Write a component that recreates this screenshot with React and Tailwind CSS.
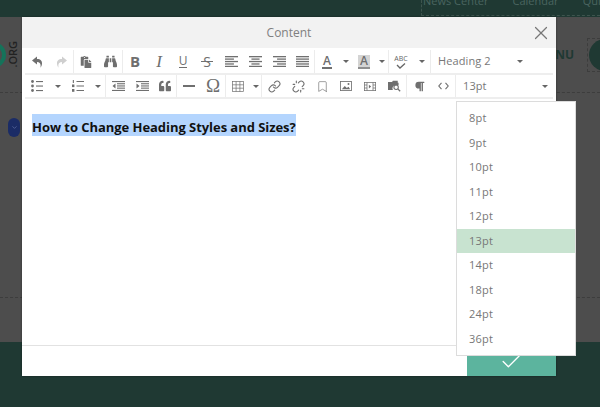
import { Link, Unlink, Bookmark, X, Check, ChevronDown } from "lucide-react";
import { FaBinoculars, FaParagraph, FaQuoteLeft, FaPaste } from "react-icons/fa";

const sizes = ["8pt", "9pt", "10pt", "11pt", "12pt", "13pt", "14pt", "18pt", "24pt", "36pt"];

function Caret() {
    return <span className="h-0 w-0 border-x-[3px] border-t-[3px] border-x-transparent border-t-[#666]" />;
}

function Lines({ widths }) {
    return (
        <svg width="13" height="11" viewBox="0 0 16 13.5" fill="#6f6f6f">
            {[0, 1, 2, 3, 4].map((i) => (
                <rect key={i} x={widths[i][0]} y={i * 3} width={widths[i][1]} height="1.6" />
            ))}
        </svg>
    );
}

const left = [[0, 16], [0, 11], [0, 16], [0, 11], [0, 16]];
const center = [[0, 16], [3, 10], [0, 16], [3, 10], [0, 16]];
const right = [[0, 16], [5, 11], [0, 16], [5, 11], [0, 16]];
const full = [[0, 16], [0, 16], [0, 16], [0, 16], [0, 16]];

function Arrow({ flip, color }) {
    return (
        <svg width="11" height="12" viewBox="0 0 11 12" fill={color} className={flip ? "-scale-x-100" : ""}>
            <path d="M5 0.5L0 4.5L5 8.5V6C8 6 9.2 7.8 8.4 11.8C10.8 8.6 11.2 3 5 3z" />
        </svg>
    );
}

function BulletList() {
    return (
        <svg width="12" height="12" viewBox="0 0 12 12" fill="#6f6f6f">
            <circle cx="1.5" cy="1.5" r="1.4" />
            <circle cx="1.5" cy="6" r="1.4" />
            <circle cx="1.5" cy="10.5" r="1.4" />
            <rect x="5" y="1" width="7" height="1.1" />
            <rect x="5" y="5.5" width="7" height="1.1" />
            <rect x="5" y="10" width="7" height="1.1" />
        </svg>
    );
}

function NumList() {
    return (
        <svg width="12" height="12" viewBox="0 0 12 12" fill="#6f6f6f">
            <rect x="0.8" y="0" width="1.1" height="3" />
            <rect x="0" y="4.5" width="2.4" height="2.6" />
            <rect x="0" y="9" width="2.4" height="2.8" />
            <rect x="4.5" y="1" width="7.5" height="1" />
            <rect x="4.5" y="5.5" width="7.5" height="1" />
            <rect x="4.5" y="10" width="7.5" height="1" />
        </svg>
    );
}

function Indent({ out }) {
    return (
        <svg width="13" height="10" viewBox="0 0 13 10" fill="#6f6f6f">
            <rect x="0" y="0" width="13" height="1.1" />
            <rect x="5" y="2.2" width="8" height="1.1" />
            <rect x="5" y="4.4" width="8" height="1.1" />
            <rect x="5" y="6.6" width="8" height="1.1" />
            <rect x="0" y="8.9" width="13" height="1.1" />
            <path d={out ? "M3.5 2.5v5L0.5 5z" : "M0.5 2.5v5L3.5 5z"} />
        </svg>
    );
}

function TableIcon() {
    return (
        <svg width="12" height="11" viewBox="0 0 12 11" fill="none" stroke="#6f6f6f" strokeWidth="0.7">
            <rect x="0.4" y="0.4" width="11.2" height="10.2" />
            <path d="M0.4 3.8h11.2M0.4 7.2h11.2M4.1 0.4v10.2M7.9 0.4v10.2" />
        </svg>
    );
}

function ImageIcon() {
    return (
        <svg width="12" height="10" viewBox="0 0 14 12" fill="none">
            <rect x="0.5" y="0.5" width="13" height="11" stroke="#6f6f6f" />
            <path d="M2 10l3.5-4 2.5 2.5 2-1.5 2 3z" fill="#6f6f6f" />
            <circle cx="10" cy="3.7" r="1.2" fill="#6f6f6f" />
        </svg>
    );
}

function MediaIcon() {
    return (
        <svg width="12" height="9" viewBox="0 0 16 12" fill="none" stroke="#6f6f6f">
            <rect x="0.5" y="0.5" width="15" height="11" />
            <path d="M4 0.5v11M12 0.5v11M0.5 4h3.5M0.5 8h3.5M12 4h3.5M12 8h3.5" />
            <path d="M6.5 3.5v5l3-2.5z" fill="#6f6f6f" stroke="none" />
        </svg>
    );
}

function FolderSearch() {
    return (
        <svg width="13" height="12" viewBox="0 0 16 14" fill="#6f6f6f">
            <path d="M0 2h5l1-1.5h6V3H13v3H9a4 4 0 0 0-3 6H0z" />
            <circle cx="10" cy="8.5" r="2.7" fill="none" stroke="#6f6f6f" strokeWidth="1.3" />
            <path d="M12 10.5l3 3" stroke="#6f6f6f" strokeWidth="1.5" />
        </svg>
    );
}

function Code() {
    return (
        <svg width="11" height="8" viewBox="0 0 11 8" fill="none" stroke="#6f6f6f" strokeWidth="1.1">
            <path d="M3.5 0.8L0.8 4l2.7 3.2M7.5 0.8L10.2 4l-2.7 3.2" />
        </svg>
    );
}

function Spell() {
    return (
        <div className="flex flex-col items-center leading-none">
            <span className="text-[7px] leading-[8px] text-[#666]">ABC</span>
            <svg width="10" height="6" viewBox="0 0 10 6" fill="none" stroke="#666" strokeWidth="1.3">
                <path d="M1 2l3 3 5-4.5" />
            </svg>
        </div>
    );
}

function Btn({ w = "w-6", children }) {
    return <div className={`flex ${w} h-full shrink-0 items-center justify-center`}>{children}</div>;
}

function Sep() {
    return <div className="h-full w-px shrink-0 bg-[#ececec]" />;
}

const ic = "text-[#6f6f6f]";

function Toolbar() {
    return (
        <div className="mx-[3px] mt-[2px] flex flex-col text-[#6f6f6f]">
            <div className="flex h-[25px] items-center border-b-2 border-[#eeeeee]">
                <Btn><Arrow color="#6f6f6f" /></Btn>
                <Btn><Arrow flip color="#cfcfcf" /></Btn>
                <Sep />
                <Btn><FaPaste size={12} className={ic} /></Btn>
                <Btn><FaBinoculars size={13} className={ic} /></Btn>
                <Sep />
                <Btn><span className="text-[15px] font-bold">B</span></Btn>
                <Btn><span className="font-['Liberation_Serif',serif] text-[17px] italic">I</span></Btn>
                <Btn><span className="border-b border-[#6f6f6f] text-[12px] leading-[12px]">U</span></Btn>
                <Btn>
                    <span className="relative text-[14px]">
                        S
                        <span className="absolute -left-[2px] -right-[2px] top-[10px] h-px bg-[#6f6f6f]" />
                    </span>
                </Btn>
                <Btn><Lines widths={left} /></Btn>
                <Btn><Lines widths={center} /></Btn>
                <Btn><Lines widths={right} /></Btn>
                <Btn w="w-[23px]"><Lines widths={full} /></Btn>
                <Sep />
                <Btn><span className="border-b-2 border-[#6f6f6f] px-px text-[12px] font-semibold leading-[12px]">A</span></Btn>
                <Btn w="w-[13px]"><Caret /></Btn>
                <Btn><span className="border-b-2 border-[#8f8f8f] bg-[#d4d4d4] px-[2px] text-[12px] font-semibold leading-[12px]">A</span></Btn>
                <Btn w="w-[12px]"><Caret /></Btn>
                <Sep />
                <Btn><Spell /></Btn>
                <Btn w="w-[17px]"><Caret /></Btn>
                <Sep />
                <div className="flex h-full flex-1 items-center pl-[7px] pr-[30px] text-[11px] tracking-[0.1px] text-[#777]">
                    <span className="flex-1">Heading 2</span>
                    <Caret />
                </div>
            </div>
            <div className="flex h-[24px] items-center border-b-2 border-[#eeeeee]">
                <Btn><BulletList /></Btn>
                <Btn w="w-[17px]"><Caret /></Btn>
                <Btn><NumList /></Btn>
                <Btn w="w-[15px]"><Caret /></Btn>
                <Sep />
                <Btn><Indent out /></Btn>
                <Btn><Indent /></Btn>
                <Btn w="w-[22px]"><FaQuoteLeft size={12} className={ic} /></Btn>
                <Sep />
                <Btn><div className="h-[1.5px] w-[12px] bg-[#6f6f6f]" /></Btn>
                <Btn><span className="font-['Liberation_Serif',serif] text-[19px]">Ω</span></Btn>
                <Sep />
                <Btn><TableIcon /></Btn>
                <Btn w="w-[11px]"><Caret /></Btn>
                <Sep />
                <Btn><Link size={13} className={ic} /></Btn>
                <Btn><Unlink size={13} className={ic} /></Btn>
                <Btn><Bookmark size={13} strokeWidth={1.2} className={ic} /></Btn>
                <Btn><ImageIcon /></Btn>
                <Btn><MediaIcon /></Btn>
                <Btn><FolderSearch /></Btn>
                <Sep />
                <Btn><FaParagraph size={11} className={ic} /></Btn>
                <Btn><Code /></Btn>
                <Sep />
                <div className="flex h-full flex-1 items-center pl-[7px] pr-[5px] text-[11px] tracking-[0.1px] text-[#777]">
                    <span className="flex-1">13pt</span>
                    <Caret />
                </div>
            </div>
        </div>
    );
}

export default function App() {
    return (
        <div className="relative flex h-[407px] w-[600px] flex-col overflow-hidden bg-[#4d4d4d] font-['Open_Sans',sans-serif]">
            {/* page behind the dialog */}
            <div className="flex h-[17px] shrink-0 justify-end bg-[#1f3933]">
                <div className="flex h-[16px] w-[179px] shrink-0 gap-6 overflow-hidden border-b border-l border-dashed border-[#3d544e] pl-[1px] text-[11px] leading-[2px] text-[#4a6560]">
                    <span className="whitespace-nowrap">News Center</span>
                    <span>Calendar</span>
                    <span>Quick</span>
                </div>
            </div>
            <div className="flex h-[76px] shrink-0 items-center justify-between border-b border-dashed border-[#3d3d3d]">
                <div className="flex items-center">
                    <div className="-ml-[20px] h-[26px] w-[26px] shrink-0 rounded-full border-4 border-[#15735a]" />
                    <span className="-ml-[6px] -rotate-90 text-[11px] font-semibold text-[#222]">.ORG</span>
                </div>
                <div className="flex items-center">
                    <span className="text-[12px] font-bold text-[#1f3933]">MENU</span>
                    <div className="ml-[13px] flex h-[34px] w-[13px] items-center overflow-hidden border-y border-l border-dashed border-[#3d3d3d] pl-[1px]">
                        <div className="h-[32px] w-[32px] shrink-0 rounded-full bg-[#1f3933]" />
                    </div>
                </div>
            </div>
            <div className="flex-1 pl-[8px] pt-[25px]">
                <div className="flex h-[19px] w-[12px] items-center justify-center rounded-full bg-[#1b2c66]">
                    <ChevronDown size={7} className="text-[#6f7eb0]" />
                </div>
            </div>
            <div className="h-[45px] shrink-0 border-t border-dashed border-[#3d3d3d]" />
            <div className="h-[65px] shrink-0 bg-[#1f3933]" />

            {/* dialog */}
            <div className="absolute left-[22px] top-[17px] flex h-[359px] w-[534px] flex-col bg-white shadow-[0_0_2px_rgba(0,0,0,0.4)]">
                <div className="relative flex h-[31px] shrink-0 items-center justify-center bg-[#f2f2f2] text-[12px] text-[#808080]">
                    Content
                    <X size={22} strokeWidth={1.3} className="absolute right-[4px] top-[5px] text-[#777]" />
                </div>
                <Toolbar />
                <div className="flex-1 pl-[10px] pt-[15px]">
                    <span className="inline-block h-[22px] bg-[#b4d5fe] text-[13px] font-bold leading-[26px] tracking-[-0.05px] text-[#111]">
                        How to Change Heading Styles and Sizes?
                    </span>
                </div>
                <div className="flex h-[31px] shrink-0 justify-end border-t border-[#e2e2e2]">
                    <div className="flex w-[89px] items-center justify-center bg-[#5cb49e]">
                        <Check size={25} strokeWidth={1.3} className="text-white" />
                    </div>
                </div>
            </div>

            {/* font size menu */}
            <div className="absolute left-[456px] top-[101px] flex h-[255px] w-[120px] flex-col border border-[#dcdcdc] bg-white py-[4px] text-[11px] tracking-[0.2px] text-[#777]">
                {sizes.map((s) => (
                    <div key={s} className={`flex h-[24.5px] shrink-0 items-center pl-[12px] ${s === "13pt" ? "bg-[#c8e3d0]" : ""}`}>
                        {s}
                    </div>
                ))}
            </div>
        </div>
    );
}
